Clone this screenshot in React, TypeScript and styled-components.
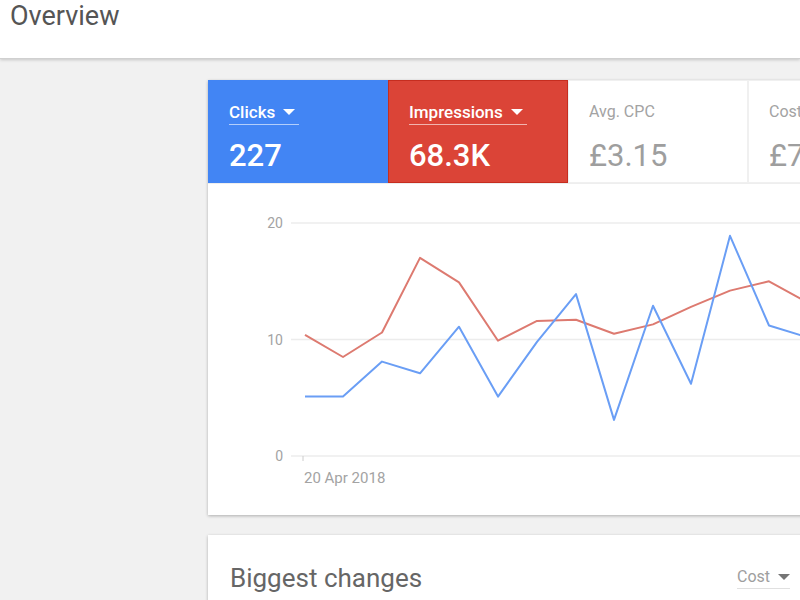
import React from "react";
import styled, { createGlobalStyle } from "styled-components";

const Global = createGlobalStyle`
  html, body { margin: 0; padding: 0; overflow: hidden; }
  body { background: #f1f1f1; font-family: Roboto, "Liberation Sans", sans-serif; width: 800px; height: 600px; }
`;

const Header = styled.header`
  height: 59px;
  background: #fff;
  border-bottom: 1px solid #d0d0d0;
  box-shadow: 0 1px 3px rgba(0,0,0,0.18);
  display: flex;
  align-items: flex-start;
  padding: 0 0 0 10px;
  box-sizing: border-box;
  position: relative;
  z-index: 1;
`;

const Title = styled.h1`
  margin: 0;
  font-size: 27px;
  font-weight: 400;
  color: #555;
  line-height: 32px;
`;

const Main = styled.main`
  padding: 21px 0 0 208px;
  display: flex;
  flex-direction: column;
  gap: 20px;
`;

const Card = styled.section`
  width: 760px;
  background: #fff;
  box-shadow: 0 1px 3px rgba(0,0,0,0.28);
  flex-shrink: 0;
`;

const Tabs = styled.div`
  display: flex;
  height: 103px;
`;

const Tab = styled.div<{ $bg?: string; $border?: string }>`
  width: 180px;
  box-sizing: border-box;
  background: ${(p) => p.$bg || "#fff"};
  border: 1px solid ${(p) => p.$border || "#f0f0f0"};
  padding: 21px 0 0 20px;
  display: flex;
  flex-direction: column;
  gap: 14px;
`;

const Label = styled.div<{ $sel?: boolean }>`
  display: inline-flex;
  align-self: flex-start;
  align-items: center;
  gap: 8px;
  line-height: 20px;
  padding: 0 4px 2px 0;
  border-bottom: 1px solid ${(p) => (p.$sel ? "rgba(255,255,255,0.6)" : "transparent")};
  font-weight: ${(p) => (p.$sel ? 500 : 400)};
  color: ${(p) => (p.$sel ? "#fff" : "#a3a3a3")};
  font-size: ${(p) => (p.$sel ? "17px" : "16px")};
`;

const Value = styled.div<{ $sel?: boolean }>`
  font-size: 31px;
  line-height: 34px;
  font-weight: ${(p) => (p.$sel ? 500 : 400)};
  color: ${(p) => (p.$sel ? "#fff" : "#9e9e9e")};
`;

const Caret = styled.span<{ $color?: string }>`
  width: 0;
  height: 0;
  border-left: 6px solid transparent;
  border-right: 6px solid transparent;
  border-top: 6px solid ${(p) => p.$color || "#fff"};
`;

const ChartArea = styled.div`
  height: 331px;
  border-top: 1px solid #eee;
`;

const ChangesCard = styled(Card)`
  height: 120px;
  padding: 27px 0 0 22px;
  box-sizing: border-box;
`;

const ChangesHead = styled.div`
  width: 560px;
  display: flex;
  justify-content: space-between;
  align-items: center;
`;

const ChangesTitle = styled.h2`
  margin: 0;
  font-size: 26px;
  line-height: 32px;
  font-weight: 400;
  color: #666;
`;

const Select = styled.div`
  display: flex;
  align-items: center;
  gap: 8px;
  font-size: 16px;
  color: #9e9e9e;
  border-bottom: 1px solid #e0e0e0;
  padding-bottom: 2px;
`;

const xs = [305, 343, 382, 420, 459, 498, 537, 576, 614, 653, 691, 730, 769, 807, 846];
const blue = [5.1, 5.1, 8.1, 7.1, 11.1, 5.1, 9.8, 13.9, 3.1, 12.9, 6.2, 18.9, 11.2, 10.2, 9];
const red = [10.4, 8.5, 10.6, 17, 14.9, 9.9, 11.6, 11.7, 10.5, 11.3, 12.8, 14.2, 15.0, 13.2, 12];
const Y0 = 457;
const U = 11.65;
const pts = (v: number[]) => v.map((y, i) => `${xs[i]},${(Y0 - y * U).toFixed(1)}`).join(" ");
const FF = "Roboto, 'Liberation Sans', sans-serif";

function Chart() {
  return (
    <svg width="760" height="331" viewBox="208 185 760 331">
      {[0, 10, 20].map((v) => (
        <g key={v}>
          <line x1={291} x2={968} y1={Y0 - v * U} y2={Y0 - v * U} stroke="#ececec" strokeWidth={1.5} />
          <text x={283} y={Y0 - v * U + 5} textAnchor="end" fontSize={14} fill="#a3a3a3" fontFamily={FF}>{v}</text>
        </g>
      ))}
      <line x1={303} x2={303} y1={Y0} y2={Y0 + 5} stroke="#ccc" />
      <text x={304} y={484} fontSize={15} fill="#a3a3a3" fontFamily={FF}>20 Apr 2018</text>
      <polyline points={pts(red)} fill="none" stroke="#dd7a70" strokeWidth={2} strokeLinejoin="round" />
      <polyline points={pts(blue)} fill="none" stroke="#6a9ef5" strokeWidth={2} strokeLinejoin="round" />
    </svg>
  );
}

export default function App() {
  return (
    <>
      <Global />
      <Header>
        <Title>Overview</Title>
      </Header>
      <Main>
        <Card>
          <Tabs>
            <Tab $bg="#4285f4" $border="#4285f4">
              <Label $sel>Clicks <Caret /></Label>
              <Value $sel>227</Value>
            </Tab>
            <Tab $bg="#db4437" $border="#c62d1f">
              <Label $sel>Impressions <Caret /></Label>
              <Value $sel>68.3K</Value>
            </Tab>
            <Tab>
              <Label>Avg. CPC</Label>
              <Value>£3.15</Value>
            </Tab>
            <Tab>
              <Label>Cost</Label>
              <Value>£716</Value>
            </Tab>
          </Tabs>
          <ChartArea>
            <Chart />
          </ChartArea>
        </Card>
        <ChangesCard>
          <ChangesHead>
            <ChangesTitle>Biggest changes</ChangesTitle>
            <Select>Cost <Caret $color="#757575" /></Select>
          </ChangesHead>
        </ChangesCard>
      </Main>
    </>
  );
}
